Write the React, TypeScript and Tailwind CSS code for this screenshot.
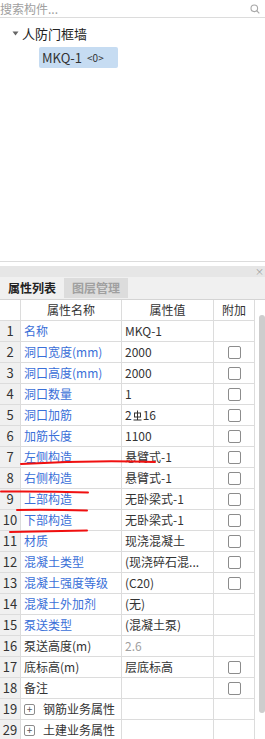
import React from "react";

type Row = {
  no: string;
  name: string;
  value: React.ReactNode;
  blue?: boolean;
  check?: boolean;
  gray?: boolean;
  group?: boolean;
};

const FONT = { fontFamily: '"Noto Sans CJK SC", "Noto Sans", sans-serif' };

function Rebar() {
  // 三级钢筋符号
  return (
    <svg width="9" height="11" viewBox="0 0 9 11" className="mx-[1px] inline-block align-[-1px]" aria-hidden="true">
      <line x1="4.5" y1="0.5" x2="4.5" y2="10" stroke="#333" strokeWidth="1" />
      <rect x="1.5" y="3" width="6" height="4" fill="none" stroke="#333" strokeWidth="1" />
      <line x1="0.5" y1="10" x2="8.5" y2="10" stroke="#333" strokeWidth="1" />
    </svg>
  );
}

const rows: Row[] = [
  { no: "1", name: "名称", value: "MKQ-1", blue: true },
  { no: "2", name: "洞口宽度(mm)", value: "2000", blue: true, check: true },
  { no: "3", name: "洞口高度(mm)", value: "2000", blue: true, check: true },
  { no: "4", name: "洞口数量", value: "1", blue: true, check: true },
  { no: "5", name: "洞口加筋", value: <>2<Rebar />16</>, blue: true, check: true },
  { no: "6", name: "加筋长度", value: "1100", blue: true, check: true },
  { no: "7", name: "左侧构造", value: "悬臂式-1", blue: true, check: true },
  { no: "8", name: "右侧构造", value: "悬臂式-1", blue: true, check: true },
  { no: "9", name: "上部构造", value: "无卧梁式-1", blue: true, check: true },
  { no: "10", name: "下部构造", value: "无卧梁式-1", blue: true, check: true },
  { no: "11", name: "材质", value: "现浇混凝土", blue: true, check: true },
  { no: "12", name: "混凝土类型", value: "(现浇碎石混...", blue: true, check: true },
  { no: "13", name: "混凝土强度等级", value: "(C20)", blue: true, check: true },
  { no: "14", name: "混凝土外加剂", value: "(无)", blue: true },
  { no: "15", name: "泵送类型", value: "(混凝土泵)", blue: true },
  { no: "16", name: "泵送高度(m)", value: "2.6", gray: true },
  { no: "17", name: "底标高(m)", value: "层底标高", check: true },
  { no: "18", name: "备注", value: "", check: true },
  { no: "19", name: "钢筋业务属性", value: "", group: true },
  { no: "29", name: "土建业务属性", value: "", group: true },
];

function Checkbox() {
  return <span className="block h-[13px] w-[13px] rounded-[2px] border border-[#8c8c8c] bg-white" />;
}

export default function App() {
  return (
    <div className="relative h-[739px] w-[265px] overflow-hidden bg-white text-[12px] text-[#333]" style={FONT}>
      {/* 构件树 */}
      <div className="h-[262px] border-b border-[#dcdcdc]">
        <div className="flex h-[18px] items-center justify-between border-b border-[#dcdcdc] pr-[5px]">
          <span className="text-[#a0a0a0]">搜索构件...</span>
          <svg width="10" height="10" viewBox="0 0 10 10" aria-hidden="true">
            <circle cx="4.3" cy="4.3" r="3.3" fill="none" stroke="#a8a8a8" strokeWidth="1.1" />
            <line x1="6.7" y1="6.7" x2="9.3" y2="9.3" stroke="#a8a8a8" strokeWidth="1.2" />
          </svg>
        </div>
        <div className="flex h-[29px] items-center pl-[12px] pt-[2px]">
          <svg width="7" height="5" viewBox="0 0 7 5" className="mr-[3px]" aria-hidden="true">
            <polygon points="0.5,0.5 6.5,0.5 3.5,4.5" fill="#666" />
          </svg>
          <span className="text-[13px] text-[#222]">人防门框墙</span>
        </div>
        <div className="pl-[39px]">
          <div className="flex h-[21px] w-[79px] items-center rounded-[2px] bg-[#c6dcf2] pl-[3px] text-[#333]">
            <span className="text-[13px]">MKQ-1</span>
            <span className="ml-[5px] text-[10px]">&lt;0&gt;</span>
          </div>
        </div>
      </div>

      {/* 属性面板 */}
      <div className="mt-[4px]">
        <div className="flex h-[11px] items-center justify-end bg-[#e6e6e6] pr-[1px] text-[9px] leading-none text-[#9a9a9a]">
          ×
        </div>
        <div className="flex h-[23px] border-b border-[#d4d4d4] bg-[#f0f0f0]">
          <div className="flex w-[64px] items-center justify-center font-bold text-[#222]">属性列表</div>
          <div className="my-[1px] flex w-[64px] items-center justify-center bg-[#dcdcdc] font-bold text-[#a0a0a0]">
            图层管理
          </div>
        </div>

        <div className="flex">
          <div className="w-[255px]">
            <div className="flex h-[21px] border-b border-[#dcdcdc] text-[#333]">
              <div className="w-[21px] border-r border-[#dcdcdc]" />
              <div className="flex w-[101px] items-center justify-center border-r border-[#dcdcdc]">属性名称</div>
              <div className="flex w-[92px] items-center justify-center border-r border-[#dcdcdc]">属性值</div>
              <div className="flex w-[41px] items-center justify-center border-r border-[#dcdcdc]">附加</div>
            </div>
            {rows.map((r) => (
              <div key={r.no} className="flex h-[21px] border-b border-[#dcdcdc]">
                <div className="flex w-[21px] items-center justify-center border-r border-[#dcdcdc] bg-[#f0f0f0] text-[13px] text-[#333]">
                  {r.no}
                </div>
                <div
                  className={`flex w-[101px] items-center overflow-hidden whitespace-nowrap border-r border-[#dcdcdc] pl-[3px] ${
                    r.blue ? "text-[#3a6fd8]" : "text-[#333]"
                  }`}
                >
                  {r.group ? (
                    <>
                      <span className="mr-[8px] flex h-[11px] w-[11px] items-center justify-center rounded-[2px] border border-[#8c8c8c] text-[10px] leading-none text-[#555]">
                        +
                      </span>
                      <span className="text-[#333]">{r.name}</span>
                    </>
                  ) : (
                    r.name
                  )}
                </div>
                <div
                  className={`flex w-[92px] items-center overflow-hidden whitespace-nowrap border-r border-[#dcdcdc] pl-[3px] ${
                    r.gray ? "text-[#a0a0a0]" : "text-[#333]"
                  }`}
                >
                  {r.value}
                </div>
                <div className="flex w-[41px] items-center justify-center border-r border-[#dcdcdc]">
                  {r.check && <Checkbox />}
                </div>
              </div>
            ))}
          </div>
          <div className="w-[10px] pl-[4px] pt-[15px]">
            <div className="h-[398px] w-[6px] rounded-[3px] bg-[#cdcdcd]" />
          </div>
        </div>
      </div>

      {/* 红色标注线 */}
      <svg className="pointer-events-none absolute left-0 top-0" width="265" height="739" aria-hidden="true">
        <g fill="none" stroke="#f01010" strokeWidth="2" strokeLinecap="round">
          <path d="M21 464 Q 90 460 155 462" />
          <path d="M1 491.5 Q 45 491 88 492.5" />
          <path d="M17 510 Q 52 509.5 87 510.5" />
          <path d="M10 532 Q 48 531 87 530.5" />
        </g>
      </svg>
    </div>
  );
}
